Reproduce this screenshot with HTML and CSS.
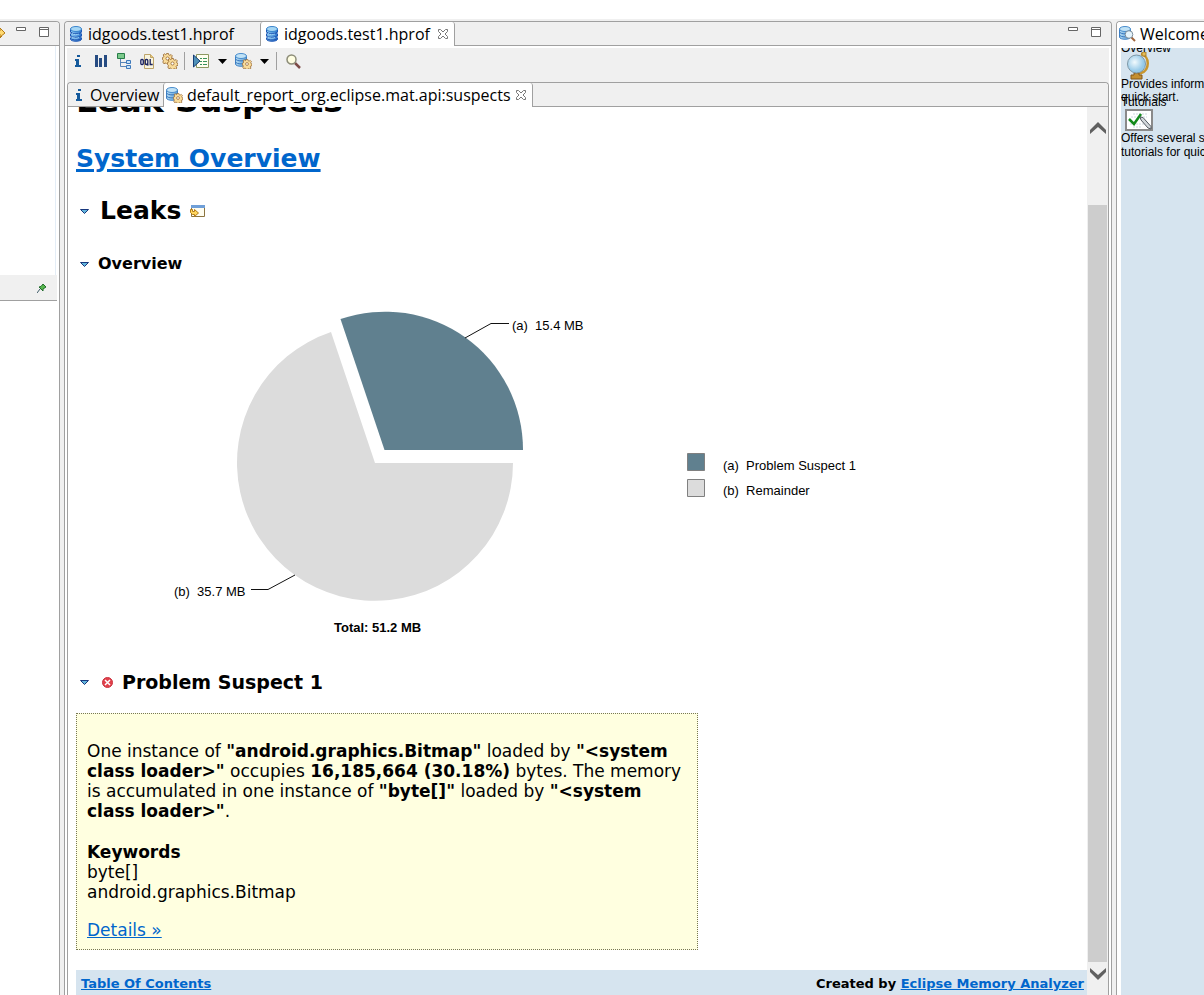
FILE: index.html
```html
<!DOCTYPE html>
<html lang="en">
<head>
<meta charset="utf-8">
<title>Eclipse Memory Analyzer</title>
<link rel="stylesheet" href="styles.css">
</head>
<body>
<svg class="defs" aria-hidden="true">
  <defs>
    <linearGradient id="blue" x1="0" x2="1"><stop offset="0" stop-color="#8ccaf3"/><stop offset="1" stop-color="#2a74cc"/></linearGradient>
    <linearGradient id="pale" x1="0" x2="1"><stop offset="0" stop-color="#b4dbf3"/><stop offset="1" stop-color="#5d9fd8"/></linearGradient>
    <radialGradient id="globe" cx=".4" cy=".4"><stop offset="0" stop-color="#f2fafd"/><stop offset="1" stop-color="#95c9e8"/></radialGradient>
    <symbol id="db" viewBox="0 0 12 16">
      <path d="M.5 3v3l1 1-1 1v2l1 1-1 1v1c0 3 11 3 11 0v-1l-1-1 1-1V8l-1-1 1-1V3z" fill="url(#blue)" stroke="#1d57b5"/>
      <ellipse cx="6" cy="3" rx="5.5" ry="2.5" fill="#a5d6f4" stroke="#3b85cd"/>
      <path d="M1 6c1 2.500 9 2.500 10 0M1 9.500c1 2.500 9 2.500 10 0M1 12.500c1 2 9 2 10 0" fill="none" stroke="#1a4fae"/>
      <path d="M2 7.500c2 1.500 5 1.500 7 .5M2 11c2 1.500 5 1.500 7 .5" fill="none" stroke="#9bd0f5"/>
    </symbol>
    <symbol id="dbpale" viewBox="0 0 12 14">
      <path d="M.5 3v8c0 3 11 3 11 0V3z" fill="url(#pale)" stroke="#3f80c4"/>
      <ellipse cx="6" cy="3" rx="5.500" ry="2.500" fill="#c0e2f6" stroke="#4a8dcd"/>
      <path d="M.5 6c1 2.500 10 2.500 11 0M.5 9c1 2.500 10 2.500 11 0" fill="none" stroke="#3474bd"/>
    </symbol>
    <symbol id="gear" viewBox="0 0 12 12">
      <path d="M5 .5h2l.4 1.600 1.100.5 1.400-.9 1.400 1.400-.9 1.400.5 1.100 1.100.4v2l-1.600.4-.5 1.100.9 1.400-1.400 1.400-1.400-.9-1.100.5-.4 1.100H5l-.4-1.600-1.100-.5-1.400.9L.9 9.900l.7-1.400-.5-1.100L.5 7V5l1.100-.4.5-1.100-.9-1.400L2.600.9l1.400.9.7-.3z" fill="#f9dc9b" stroke="#986832" stroke-width=".9"/>
      <circle cx="6" cy="6" r="1.700" fill="#fff" stroke="#986832" stroke-width=".9"/>
    </symbol>
    <symbol id="dbgear" viewBox="0 0 17 16">
      <use href="#dbpale" width="12" height="14"/><use href="#gear" x="7" y="6" width="10" height="10"/>
    </symbol>
    <symbol id="info" viewBox="0 0 6 12"><path d="M2 0h3v2H2zM0 4h4v6h2v2H0v-2h1V6H0z" fill="#155a9c"/></symbol>
    <symbol id="close" viewBox="0 0 12 12"><path d="M1.500 1.500h2l2.500 2.500 2.500-2.500h2v2L8 6l2.500 2.500v2h-2L6 8l-2.500 2.500h-2v-2L4 6 1.500 3.500z" fill="#fff" stroke="#777"/></symbol>
    <symbol id="min" viewBox="0 0 11 12"><path d="M.5.5h9v3h-9z" fill="#fff" stroke="#666"/></symbol>
    <symbol id="max" viewBox="0 0 11 12"><path d="M.5.5h9v9h-9zM0 2.500h10" fill="#fff" stroke="#666"/></symbol>
    <symbol id="twist" viewBox="0 0 9 5"><path d="M.5.5h8l-4 4z" fill="#62b6dc" stroke="#17377d"/></symbol>
    <symbol id="drop" viewBox="0 0 9 5"><path d="M0 0h9L4.500 5z"/></symbol>
    <symbol id="goto" viewBox="0 0 16 14">
      <path d="M1.500 1.500h13v11h-13z" fill="#fffdf0" stroke="#8c7440"/><path d="M1 1h14v3H1z" fill="#6f9fd8"/>
      <path d="M.5 5.500h2v2h2v-2l4 3.500-4 3.500v-2h-2l-2-2z" fill="#ffd75e" stroke="#b37a16"/>
    </symbol>
  </defs>
</svg>
<div class="app">
  <aside class="side">
    <header class="bar side-bar">
      <svg class="arrow" width="6" height="14" viewBox="0 0 6 14"><path d="M-4 4H0V1l5 5-5 4V7M-2 13l4-4" fill="#ffd970" stroke="#b37a16"/></svg>
      <button class="ico" aria-label="Minimize"><svg width="11" height="12"><use href="#min"/></svg></button>
      <button class="ico" aria-label="Maximize"><svg width="11" height="12"><use href="#max"/></svg></button>
    </header>
    <div class="side-top"></div>
    <div class="pin-bar">
      <button class="ico" aria-label="Pin"><svg width="10" height="10" viewBox="0 0 10 10"><path d="M0 10l3-4" stroke="#3c5a66"/><path d="M2 4l2-.5L6 1l3 3-3 2v2z" fill="#58b84e" stroke="#1f6b2a"/></svg></button>
    </div>
    <div class="side-rest"></div>
  </aside>

  <main class="editor">
    <header class="bar tabs">
      <button class="tab tab-file"><svg width="12" height="16"><use href="#db"/></svg>idgoods.test1.hprof</button>
      <button class="tab tab-file active"><svg width="12" height="16"><use href="#db"/></svg>idgoods.test1.hprof<svg class="x" width="12" height="12"><use href="#close"/></svg></button>
      <div class="win">
        <button class="ico" aria-label="Minimize"><svg width="11" height="12"><use href="#min"/></svg></button>
        <button class="ico" aria-label="Maximize"><svg width="11" height="12"><use href="#max"/></svg></button>
      </div>
    </header>
    <div class="workspace">
      <div class="toolbar">
        <button class="ico" aria-label="Info"><svg width="6" height="12"><use href="#info"/></svg></button>
        <button class="ico gap-m" aria-label="Histogram"><svg width="12" height="12" viewBox="0 0 12 12"><path d="M0 0h3v12H0zM4 3h3v9H4zM9 0h3v12H9z" fill="#264b82"/></svg></button>
        <button class="ico" aria-label="Dominator tree"><svg width="15" height="16" viewBox="0 0 15 16"><path d="M3.500 6v7.500H9M3.500 9.500H9" fill="none" stroke="#5785b9"/><path d="M.5.500h7v5h-7z" fill="#7bc98b" stroke="#287c48"/><path d="M9.500 7.500h4v3h-4zM9.500 12.500h4v3h-4z" fill="#c7e2f8" stroke="#3d78bb"/></svg></button>
        <button class="ico" aria-label="Query"><svg width="14" height="15" viewBox="0 0 14 15"><path d="M4.500.5h6l3 3v11h-9z" fill="#f8f4df" stroke="#bda46a"/><path d="M10.500.5v3h3" fill="#edc975" stroke="#bda46a"/><g fill="none" stroke="#1b235f" stroke-width="1.300"><rect x=".8" y="5.500" width="2.500" height="5" rx="1"/><rect x="5.300" y="5.500" width="2.500" height="5" rx="1"/><path d="M6.800 9.500l1.500 2M10.200 5v5.500h2.500"/></g></svg></button>
        <button class="ico" aria-label="Query browser"><svg width="16" height="16" viewBox="0 0 16 16"><use href="#gear" width="11" height="11"/><use href="#gear" x="5" y="5" width="11" height="11"/></svg></button>
        <span class="sep"></span>
        <button class="ico" aria-label="Run report"><svg width="17" height="14" viewBox="0 0 17 14"><path d="M3.500.5h12v13h-12z" fill="#fffef0" stroke="#8d9861"/><path d="M7 4.500h2M7 7.500h2M7 10.500h2M10 4.500h4M10 7.500h4M10 10.500h4" stroke="#38925a"/><path d="M.5 1v12L7 7z" fill="#4f91b8" stroke="#173e74"/></svg></button>
        <button class="ico" aria-label="Report menu"><svg width="9" height="5"><use href="#drop"/></svg></button>
        <button class="ico" aria-label="Heap queries"><svg width="17" height="16"><use href="#dbgear"/></svg></button>
        <button class="ico" aria-label="Queries menu"><svg width="9" height="5"><use href="#drop"/></svg></button>
        <span class="sep sep-b"></span>
        <button class="ico" aria-label="Find"><svg width="15" height="15" viewBox="0 0 15 15"><path d="M9 9l5 5" stroke="#7d4b47" stroke-width="2.500"/><circle cx="5.500" cy="5.500" r="4.500" fill="#fffee2" stroke="#8c8c78" stroke-width="1.500"/></svg></button>
      </div>
      <div class="folder">
        <header class="bar subtabs">
          <button class="tab tab-info"><svg width="6" height="12"><use href="#info"/></svg>Overview</button>
          <button class="tab tab-report active"><svg width="17" height="16"><use href="#dbgear"/></svg>default_report_org.eclipse.mat.api:suspects<svg width="12" height="12"><use href="#close"/></svg></button>
        </header>
        <div class="view">
          <article class="report">
            <h1>Leak Suspects</h1>
            <h2 class="system"><a href="#">System Overview</a></h2>
            <h2 class="leaks"><svg width="9" height="5"><use href="#twist"/></svg><span>Leaks</span><svg width="16" height="14"><use href="#goto"/></svg></h2>
            <h4><svg width="9" height="5"><use href="#twist"/></svg><span>Overview</span></h4>
            <svg class="chart" width="800" height="350" viewBox="76 296 800 350" role="img" aria-label="Leak suspects pie chart">
              <path d="M375 463L331 332A138 138 0 1 0 513 463Z" fill="#dcdcdc"/>
              <path d="M384.500 450L340.500 319A138 138 0 0 1 523 450Z" fill="#60808f"/>
              <path d="M465 338L491 323.500H509M295 575L268 589.500H251" fill="none" stroke="#111"/>
              <text x="512" y="330" xml:space="preserve">(a)  15.4 MB</text>
              <text x="174" y="596" xml:space="preserve">(b)  35.7 MB</text>
              <text x="334" y="632" class="total">Total: 51.2 MB</text>
              <path d="M687.500 453.500h17v17h-17z" fill="#60808f" stroke="#808080"/>
              <path d="M687.500 479.500h17v17h-17z" fill="#dcdcdc" stroke="#808080"/>
              <text x="723" y="470" xml:space="preserve">(a)  Problem Suspect 1</text>
              <text x="723" y="495" xml:space="preserve">(b)  Remainder</text>
            </svg>
            <h3><svg width="9" height="5"><use href="#twist"/></svg><svg class="err" width="11" height="11" viewBox="0 0 11 11"><circle cx="5.500" cy="5.500" r="5" fill="#e2404b" stroke="#c93440"/><path d="M3 3l5 5M8 3L3 8" stroke="#fff" stroke-width="1.500"/></svg><span>Problem Suspect 1</span></h3>
            <section class="suspect">
              <p>One instance of <b>"android.graphics.Bitmap"</b> loaded by <b>"&lt;system class loader&gt;"</b> occupies <b>16,185,664 (30.18%)</b> bytes. The memory is accumulated in one instance of <b>"byte[]"</b> loaded by <b>"&lt;system class loader&gt;"</b>.</p>
              <p><b>Keywords</b><br>byte[]<br>android.graphics.Bitmap</p>
              <p><a href="#">Details »</a></p>
            </section>
            <footer class="foot"><a href="#">Table Of Contents</a><span>Created by <a href="#">Eclipse Memory Analyzer</a></span></footer>
          </article>
          <div class="scroll">
            <button class="ico" aria-label="Scroll up"><svg width="16" height="12" viewBox="0 0 16 12"><path d="M0 8l8-8 8 8v4L8 5l-8 7z" fill="#606060"/></svg></button>
            <div class="thumb"></div>
            <button class="ico" aria-label="Scroll down"><svg width="16" height="12" viewBox="0 0 16 12"><path d="M0 0l8 7 8-7v4l-8 8-8-8z" fill="#606060"/></svg></button>
          </div>
        </div>
      </div>
    </div>
  </main>

  <aside class="welcome">
    <header class="bar welcome-bar"><svg width="17" height="16" viewBox="0 0 17 16"><use href="#dbpale" width="12" height="14"/><path d="M12 11l4 4" stroke="#a0643c" stroke-width="2"/><circle cx="10" cy="8.500" r="3.800" fill="#e5f4fc" stroke="#7c8c99"/></svg>Welcome</header>
    <div class="cards">
      <section class="card first">
        <div class="name">Overview</div>
        <svg width="22" height="28" viewBox="0 0 22 28"><path d="M14 2c9 2 9 16 0 19l-5 1" fill="none" stroke="#c8962e" stroke-width="2.500"/><path d="M15 0h4v4h-4z" fill="#e6bd58" stroke="#9b6f1e" stroke-width=".8"/><path d="M7 21h5v2h3v4H4v-4h3z" fill="#c48f30" stroke="#85591a"/><circle cx="9.500" cy="12" r="9" fill="url(#globe)" stroke="#7d97a5"/></svg>
        <p>Provides information for<br>quick start.</p>
      </section>
      <section class="card second">
        <div class="name">Tutorials</div>
        <svg width="28" height="22" viewBox="0 0 28 22"><path d="M1 1h26v20H1z" fill="#fff" stroke="#8a8a8a" stroke-width="2"/><path d="M8 5h14M6 8h16M5 15h14M8 18h8" stroke="#ccd8df" stroke-dasharray="2 1"/><path d="M4 10l5 5 7-10" fill="none" stroke="#138a1b" stroke-width="2.500"/><path d="M15 8l3 .5 8 9v2.500l-3-1-7-8z" fill="#d3d8dc" stroke="#545b62"/></svg>
        <p>Offers several small<br>tutorials for quick start.</p>
      </section>
    </div>
  </aside>
</div>
</body>
</html>
```
FILE: styles.css
```css
* { box-sizing: border-box; }
body { margin: 0; background: #fff; color: #000; font-family: "DejaVu Sans", Verdana, sans-serif; }
svg { display: block; flex: none; }
button { margin: 0; padding: 0; border: 0; background: none; color: inherit; font: inherit; }
a { color: #06c; }
p { margin: 0; }
.defs { position: absolute; width: 0; height: 0; }

.app {
  display: grid;
  grid-template-columns: 60px minmax(0, 1fr) 88px;
  column-gap: 4px;
  height: 100vh;
  padding-top: 21px;
  overflow: hidden;
  background: linear-gradient(#fff 19px, #f0f0f0 19px);
}
.bar {
  display: flex;
  flex: none;
  height: 25px;
  border-bottom: 1px solid #a0a0a0;
  background: #f0f0f0;
  font: 16px "Open Sans", "Noto Sans", sans-serif;
}
.ico { display: flex; flex: none; }

.side { display: flex; flex-direction: column; border: 1px solid #a0a0a0; border-width: 1px 1px 0 0; border-top-right-radius: 4px; background: #fff; overflow: hidden; }
.side-bar { height: 24px; gap: 12px; padding-top: 5px; }
.side-bar .arrow { margin-right: -2px; }
.side-top { flex: none; height: 229px; margin-right: 3px; border-right: 1px solid #e4edf6; }
.pin-bar { display: flex; flex: none; justify-content: flex-end; align-items: center; height: 26px; margin-right: 2px; padding-right: 10px; border-bottom: 1px solid #a0a0a0; background: #f0f0f0; }
.side-rest { flex: 1; }

.editor { display: flex; flex-direction: column; border: 1px solid #a0a0a0; border-bottom: 0; border-radius: 4px 4px 0 0; background: #fff; min-height: 0; }
.tabs { height: 24px; border-radius: 4px 4px 0 0; }
.tab { display: flex; flex: none; align-items: center; gap: 6px; height: 24px; white-space: nowrap; }
.tab-file { width: 195px; padding-left: 5px; }
.tab.active { border: 1px solid #a0a0a0; border-width: 0 1px; border-radius: 3px 3px 0 0; background: #fff; }
.win { display: flex; gap: 12px; margin-left: auto; padding: 5px 9px 0 0; }
.workspace { display: flex; flex: 1; flex-direction: column; min-height: 0; margin: 2px 2px 0; background: #f0f0f0; }
.toolbar { display: flex; flex: none; align-items: center; gap: 8px; height: 34px; padding: 0 0 8px 8px; }
.gap-m { margin: 0 2px 0 6px; }
.sep { width: 1px; height: 18px; background: #a0a0a0; margin: 0 0 0 -2px; }
.sep-b { margin: 0 1px 0 -1px; }
.folder { display: flex; flex: 1; flex-direction: column; min-height: 0; border: 1px solid #a0a0a0; border-bottom: 0; border-radius: 4px 4px 0 0; background: #fff; }
.subtabs { height: 24px; border-radius: 4px 4px 0 0; }
.tab-info { width: 95px; padding-left: 8px; gap: 8px; }
.tab-report { padding: 0 5px 0 2px; gap: 4px; }
.x { margin-left: 1px; }

.view { display: flex; flex: 1; min-height: 0; overflow: hidden; }
.report { flex: 1; min-width: 0; height: 100%; padding-left: 8px; overflow: hidden; }
h1, h2, h3, h4 { margin: 0; }
h1 { margin-top: -26px; font-size: 33px; line-height: 40px; }
h2 { font-size: 25px; line-height: 32px; }
.system { margin-top: 22px; }
.system a { text-decoration-thickness: 3px; }
.leaks, h3, h4 { display: flex; align-items: center; padding-left: 4px; }
.leaks { gap: 9px; margin-top: 20px; }
.leaks span { padding-left: 2px; }
h4 { gap: 9px; margin-top: 25px; font-size: 16px; line-height: 24px; }
.chart { margin-top: 20px; font: 13px "Liberation Sans", Arial, sans-serif; }
.total { font-weight: bold; }
h3 { gap: 9px; margin-top: 22px; font-size: 19px; line-height: 28px; }
.err { margin-left: 4px; }
.suspect { width: 622px; max-width: 100%; margin-top: 17px; padding: 27px 10px 9px; border: 1px dotted #777755; background: #ffffe0; font-size: 17px; line-height: 20px; }
.suspect p + p { margin-top: 21px; }
.suspect p + p + p { margin-top: 18px; }
.foot { display: flex; justify-content: space-between; height: 40px; margin-top: 20px; padding: 5px 3px 0 5px; background: #d6e4ef; font-size: 13px; font-weight: bold; line-height: 17px; }

.scroll { display: flex; flex-direction: column; flex: none; align-items: center; width: 21px; padding: 15px 0 15px; background: #f0f0f0; }
.thumb { flex: 1; width: 19px; margin: 71px 0 6px; background: #cdcdcd; }

.welcome { display: flex; flex-direction: column; min-height: 0; border: 1px solid #a0a0a0; border-width: 1px 0 0 1px; border-top-left-radius: 4px; background: #fff; overflow: hidden; }
.welcome-bar { align-items: center; gap: 4px; height: 25px; padding: 0 0 1px 2px; border: 0; background: #fff; white-space: nowrap; }
.cards { flex: 1; min-height: 0; margin: 1px 0 0 4px; overflow: hidden; background: #d6e4ef; font: 12px "Liberation Sans", Arial, sans-serif; line-height: 14px; white-space: nowrap; }
.card svg { margin: -3px 0 0 6px; }
.first { margin-top: -7px; }
.first p { margin-top: -2px; line-height: 13px; }
.second { margin-top: -9px; }
.card.second svg { margin: 0 0 0 4px; }
```
